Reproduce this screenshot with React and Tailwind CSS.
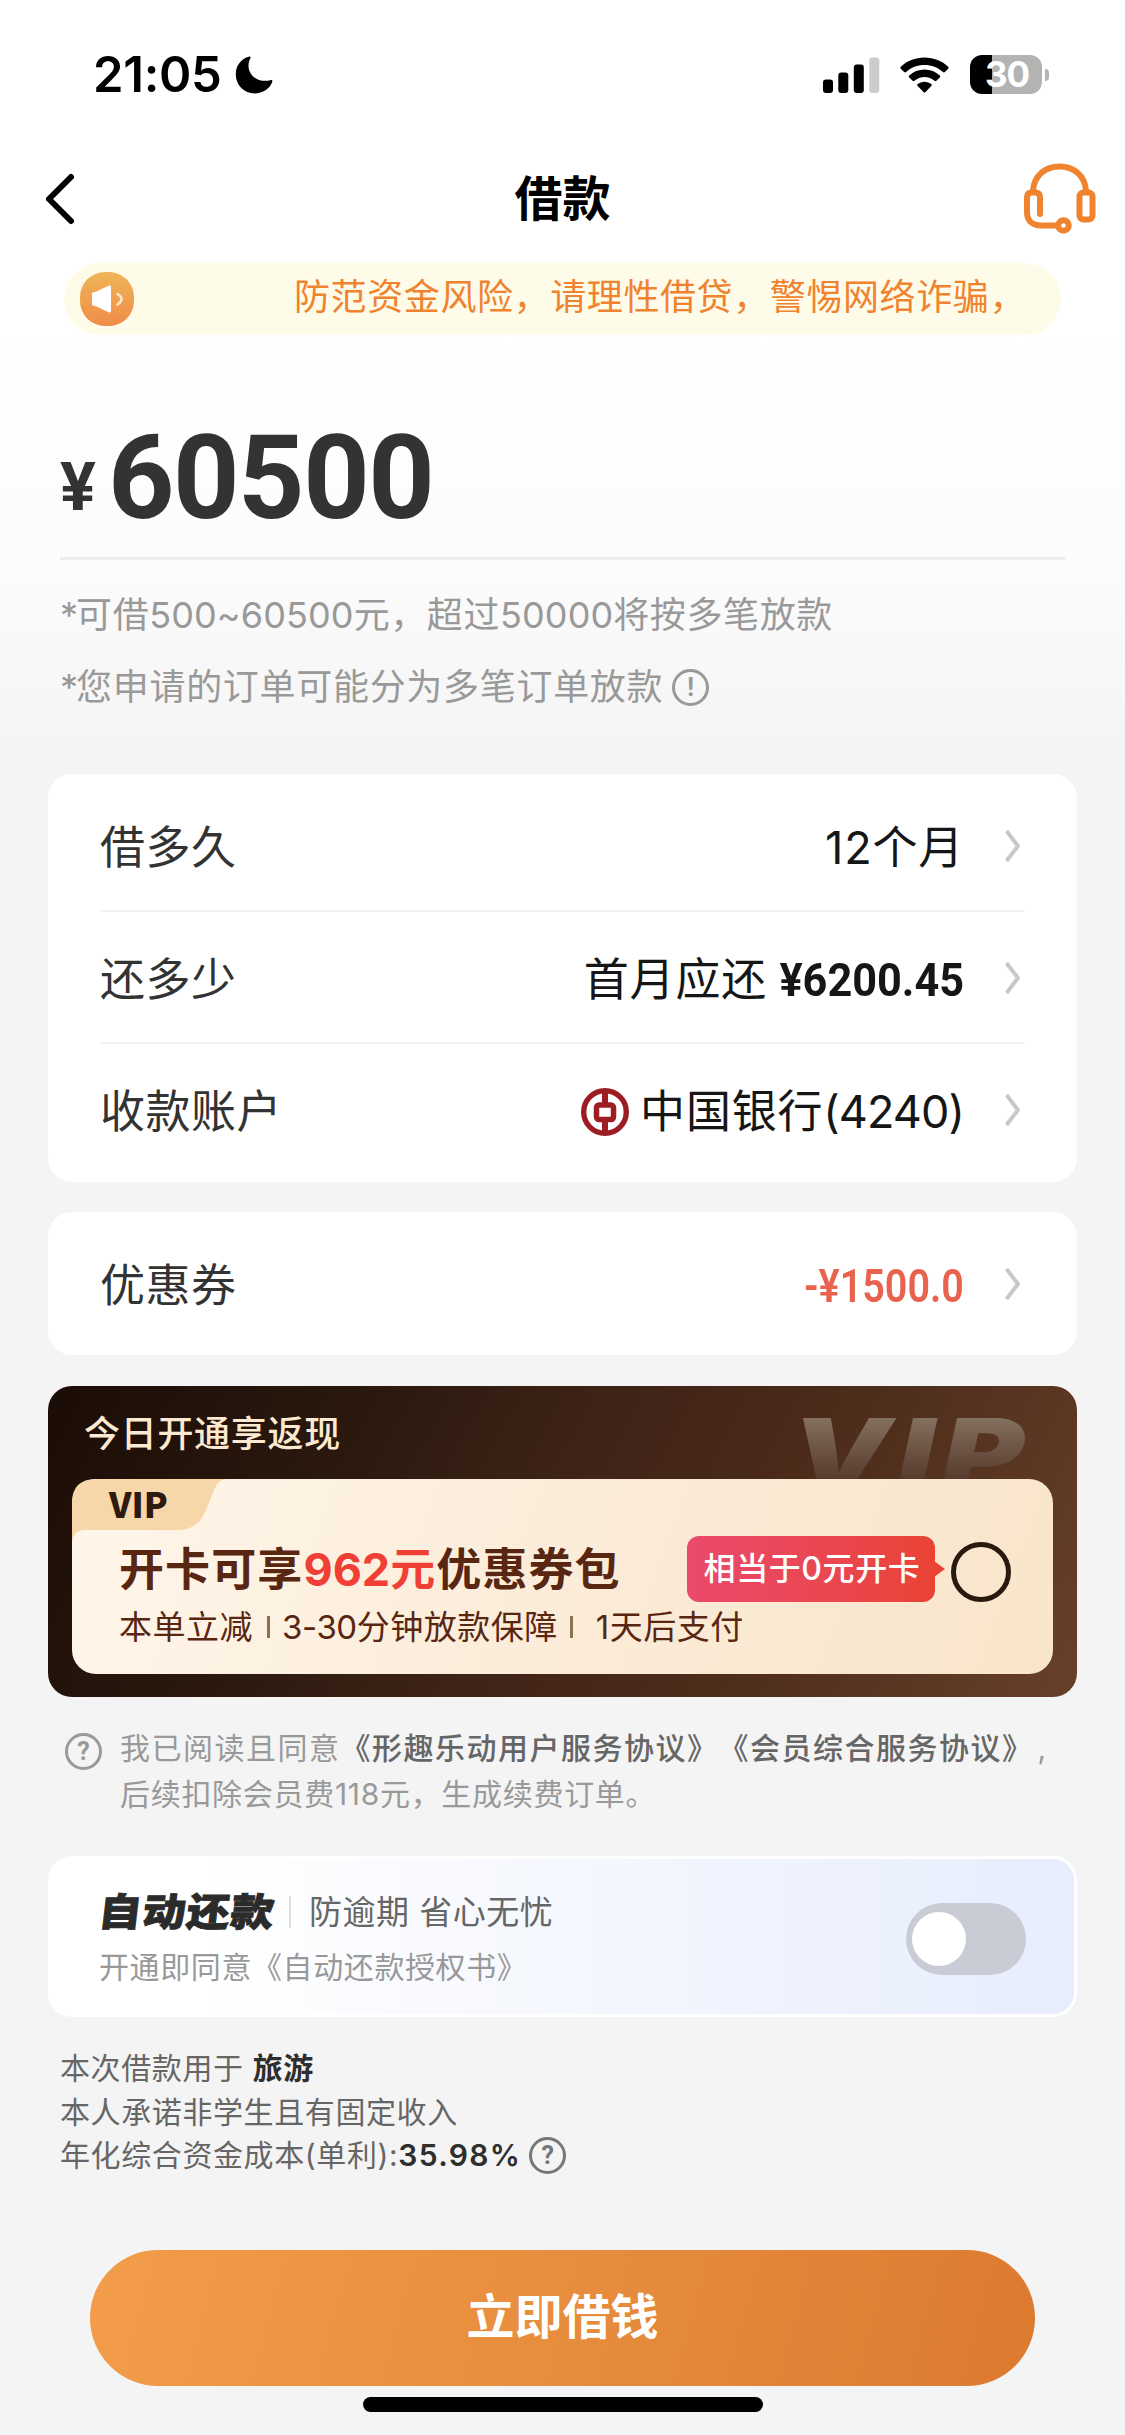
import React from "react";

function Moon() {
  return (
    <svg width="38" height="38" viewBox="0 0 38 38">
      <path d="M14.5 .6C5.6 3 .8 9.900.8 18.500.8 29.500 9.200 37.400 19.600 37.400 28 37.400 34.600 32.800 37.200 26 37.800 24.200 36.800 23.700 35.300 24.200 24.600 27 13.500 20.800 13.500 9.500 13.500 6.900 14.300 4.600 15.300 2.300 15.900 1 15.600.400 14.500.600Z" />
    </svg>
  );
}

function Signal() {
  return (
    <svg width="57" height="36" viewBox="0 0 57 36">
      <rect x="0" y="22.500" width="10" height="13.500" rx="3" />
      <rect x="15.300" y="15.500" width="10" height="20.500" rx="3" />
      <rect x="30.800" y="7.500" width="10" height="28.500" rx="3" />
      <rect x="46.300" y=".5" width="10" height="35.500" rx="3" fill="#cccccc" />
    </svg>
  );
}

function Wifi() {
  return (
    <svg width="49" height="36" viewBox="0 0 49 36">
      <path d="M24.500 .5C15.300.500 6.900 4 .8 9.700.2 10.300.200 11.100.800 11.700L4.100 15C4.700 15.600 5.500 15.600 6.100 15 11 10.600 17.400 8 24.500 8S38 10.600 42.900 15C43.500 15.600 44.300 15.600 44.900 15L48.200 11.700C48.800 11.100 48.800 10.300 48.200 9.700 42.100 4 33.700.500 24.500.500Z" />
      <path d="M24.500 12.600C18.600 12.600 13.300 14.800 9.200 18.400 8.600 19 8.600 19.800 9.200 20.400L12.600 23.700C13.200 24.300 13.900 24.300 14.500 23.800 17.200 21.500 20.700 20.100 24.500 20.100S31.800 21.500 34.500 23.800C35.100 24.300 35.800 24.300 36.400 23.700L39.800 20.400C40.400 19.800 40.400 19 39.800 18.400 35.700 14.800 30.400 12.600 24.500 12.600Z" />
      <path d="M24.500 24.700C21.900 24.700 19.600 25.600 17.700 27.100 17.100 27.600 17.100 28.400 17.700 29L23.500 35C24.100 35.700 24.900 35.700 25.500 35L31.300 29C31.900 28.400 31.900 27.600 31.300 27.100 29.400 25.600 27.100 24.700 24.500 24.700Z" />
    </svg>
  );
}

function Headset() {
  return (
    <svg width="74" height="72" viewBox="0 0 74 72" fill="none" stroke="#f0832e" strokeWidth="6" strokeLinecap="round" strokeLinejoin="round">
      <path d="M10 28V27.500C11 13 22 3.500 36.500 3.500S62 13 63 27.500V28" />
      <path d="M17 51V34.500Q17 29.500 12 29.500H9Q4 29.500 4 34.500V49C4 58 9.500 62.500 18 62.500H34" />
      <rect x="56.500" y="29.500" width="13" height="27" rx="4" />
      <circle cx="40.500" cy="62.500" r="5.300" />
    </svg>
  );
}

function Speaker() {
  return (
    <div className="flex size-[54px] items-center justify-center rounded-[25px] bg-linear-to-t from-[#f08c48] to-[#efb556]">
      <svg width="54" height="54" viewBox="0 0 54 54">
        <path d="M12 22Q12 20.500 13.500 20.200L16 19.800L28.500 13.800Q31 12.800 31 15.500V38.500Q31 41.200 28.500 40.200L16 34.200L13.500 33.800Q12 33.500 12 32Z" fill="#fff" />
        <path d="M37.500 22Q41.500 24 41.500 27T37.500 32.500" fill="none" stroke="#fde9d0" strokeWidth="2.500" strokeLinecap="round" />
      </svg>
    </div>
  );
}

function BankLogo() {
  return (
    <svg width="48" height="48" viewBox="0 0 48 48" fill="none" stroke="#9d1d24">
      <circle cx="24" cy="24" r="21.300" strokeWidth="5.400" />
      <path d="M24 3V15M24 33V45" strokeWidth="6" />
      <rect x="15.500" y="17" width="17" height="14.500" rx="2.500" strokeWidth="5.500" />
    </svg>
  );
}

function Mark({ children, className }) {
  return (
    <span className={"flex size-[37px] shrink-0 items-center justify-center rounded-full border-[3px] border-current font-['Roboto'] font-bold text-[25px] leading-none tracking-normal " + className}>
      {children}
    </span>
  );
}

function Arrow() {
  return (
    <svg className="ml-[39px] mr-[3px]" width="19" height="32" viewBox="0 0 19 32" fill="none" stroke="#c8c8c8" strokeWidth="4">
      <path d="M3.500 1L15 16L3.500 31" strokeLinejoin="round" />
    </svg>
  );
}

function Row({ label, children, className }) {
  return (
    <div className={"flex items-center text-[45px] leading-[60px] tracking-[0.8px] text-[#161616] " + className}>
      <span className="-ml-px pt-[4px] tracking-[0.5px] text-[#333]">{label}</span>
      <div className="ml-auto flex items-center pt-[4px]">{children}</div>
      <Arrow />
    </div>
  );
}

export default function App() {
  return (
    <div className="flex h-[2435px] w-[1125px] flex-col overflow-hidden bg-[#f4f4f4] bg-[linear-gradient(180deg,#fff_0px,#fff_340px,#fcfcfc_560px,#f4f4f4_760px)] font-['Inter','Noto_Sans_CJK_SC',sans-serif] whitespace-nowrap [text-spacing-trim:space-all]">
      <header className="flex h-[149px] items-center pl-[93px] pr-[76px]">
        <span className="w-[142px] text-[49px] font-semibold leading-[60px] tracking-[-0.3px]">21:05</span>
        <Moon />
        <div className="ml-auto flex items-center">
          <Signal />
          <div className="ml-[20px] mr-[21px]"><Wifi /></div>
          <div className="flex h-[39px] w-[72px] items-center justify-center rounded-[12px] bg-[linear-gradient(90deg,#000_22px,#b3b3b3_22px)] pl-[2px] text-[35px] font-bold leading-none tracking-[-1px] text-white">30</div>
          <div className="ml-[3px] h-[12px] w-[4px] rounded-r-full bg-[#b3b3b3]" />
        </div>
      </header>

      <nav className="flex h-[100px] items-center justify-between pl-[44px] pr-[28px]">
        <svg width="58" height="54" viewBox="0 0 58 54" fill="none" stroke="#000" strokeWidth="6" strokeLinecap="round" strokeLinejoin="round">
          <path d="M27 5L5 27L27 49" />
        </svg>
        <h1 className="text-[48px] font-bold leading-[60px] text-black">借款</h1>
        <Headset />
      </nav>

      <div className="mx-[64px] mt-[14px] flex h-[72px] items-center rounded-full bg-[#fefbe8] pl-[16px]">
        <Speaker />
        <p className="ml-[160px] pb-[4px] text-[36px] leading-[50px] tracking-[0.6px] text-[#ef832f]">防范资金风险，请理性借贷，警惕网络诈骗，</p>
      </div>

      <section className="mx-[60px] h-[439px]">
        <div className="flex h-[225px] items-end border-b-[3px] border-[#ebebf0] pb-[21px] font-['Roboto'] font-bold text-[#333335]">
          <span className="w-[46px] pb-[14px] text-[67px] leading-[70px]">¥</span>
          <span className="ml-[2px] text-[116px] leading-[116px] tracking-[-1.500px]">60500</span>
        </div>
        <p className="mt-[30px] text-[36px] leading-[50px] tracking-[0.6px] text-[#999]">
          <span className="tracking-[-2px]">*</span>可借<span className="tracking-[0.1px]">500~60500</span>元，超过<span className="tracking-[0.1px]">50000</span>将按多笔放款
        </p>
        <div className="mt-[22px] flex items-center text-[36px] leading-[50px] tracking-[0.7px] text-[#999]">
          <span className="tracking-[-2px]">*</span>您申请的订单可能分为多笔订单放款
          <Mark className="ml-[9px]">!</Mark>
        </div>
      </section>

      <section className="mx-[48px] h-[408px] rounded-[24px] bg-white pl-[53px] pr-[52px] pt-[6px]">
        <Row label="借多久" className="h-[132px] border-b-2 border-[#f3f3f5] pt-[2px]">12个月</Row>
        <Row label="还多少" className="h-[132px] border-b-2 border-[#f3f3f5] pt-[1px]">
          首月应还
          <b className="-ml-[4px] w-[201px] origin-right scale-x-94 text-right font-['Roboto'] text-[46px] tracking-normal">¥6200.45</b>
        </Row>
        <Row label="收款账户" className="h-[132px]">
          <BankLogo />
          <span className="ml-[11px]">中国银行<span className="tracking-[-0.9px]">(4240)</span></span>
        </Row>
      </section>

      <section className="mx-[48px] mt-[30px] h-[143px] rounded-[24px] bg-white pl-[53px] pr-[52px]">
        <Row label="优惠券" className="h-full">
          <span className="origin-right scale-x-86 font-['Roboto'] text-[46px] font-semibold tracking-normal text-[#e9624d]">-¥1500.0</span>
        </Row>
      </section>

      <section className="relative mx-[48px] mt-[31px] h-[311px] overflow-hidden rounded-[24px] bg-[linear-gradient(118deg,#1a0c06_0%,#2b190e_28%,#3f2317_48%,#4d2d1b_70%,#67402a_100%)] px-[24px]">
        <div className="absolute right-[38px] top-[9px] origin-right scale-x-130 bg-linear-to-b from-[#84705f] from-20% to-[#55382a] to-75% bg-clip-text pr-[6px] text-[96px] font-black italic leading-[116px] tracking-[6px] text-transparent">VIP</div>
        <h2 className="pl-[12px] pt-[23px] text-[36px] font-medium leading-[50px] tracking-[0.7px] text-[#fce9d2]">今日开通享返现</h2>
        <div className="relative mt-[20px] flex h-[195px] w-[981px] rounded-[24px] bg-[linear-gradient(110deg,#fff6ea,#fbebd7_55%,#f9e5cb)]">
          <svg className="absolute left-0 top-0" width="156" height="62" viewBox="0 0 156 62">
            <path d="M24 0H154Q146 1 143 9L134 31Q126 51 106 51H12Q2 51 0 62V24Q0 0 24 0Z" fill="#f7d7a9" />
          </svg>
          <span className="absolute left-[37px] top-[4px] font-['Noto_Sans_CJK_SC'] text-[35px] font-black leading-[40px] text-[#2d1a10]">VIP</span>
          <div className="pl-[47px] pt-[61px] text-[#592711]">
            <p className="text-[45px] font-bold leading-[60px] tracking-[1.100px]">开卡可享<span className="text-[#f03f34]"><b className="font-bold tracking-normal">962</b>元</span>优惠券包</p>
            <p className="flex items-center text-[33px] leading-[54px] tracking-[0.5px]">
              本单立减
              <i className="ml-[14px] mr-[12px] h-[22px] w-[3px] bg-[#8c7350]" />
              <span><span className="tracking-[-0.4px]">3-30</span>分钟放款保障</span>
              <i className="ml-[12px] mr-[23px] h-[22px] w-[3px] bg-[#8c7350]" />
              1天后支付
            </p>
          </div>
          <div className="absolute left-[615px] top-[57px] flex h-[66px] w-[248px] items-center justify-center rounded-[12px] bg-linear-to-r from-[#ea4a6c] to-[#ea4335] pl-[2px] text-[32px] font-medium leading-[44px] tracking-[0.6px] text-white">
            相当于0元开卡
            <svg className="absolute left-[247px] top-[25px]" width="11" height="16" viewBox="0 0 11 16"><path d="M0 0L11 8L0 16Z" fill="#ea4335" /></svg>
          </div>
          <div className="absolute left-[879px] top-[63px] size-[60px] rounded-full border-[5px] border-[#2a190f]" />
        </div>
      </section>

      <section className="flex h-[159px] gap-[18px] pl-[65px] pt-[28px] text-[30px] leading-[46px] text-[#999]">
        <Mark className="mt-[8px]">?</Mark>
        <div>
          <p className="tracking-[1.500px]">我已阅读且同意<span className="font-medium text-[#666]">《形趣乐动用户服务协议》《会员综合服务协议》</span><span className="pl-[4px]">,</span></p>
          <p className="tracking-[0.7px]">后续扣除会员费118元，生成续费订单。</p>
        </div>
      </section>

      <section className="mx-[48px] flex h-[161px] items-center justify-between rounded-[24px] border-[3px] border-white bg-linear-to-r from-white from-15% to-[#e7edfd] pl-[48px] pr-[48px] pt-[4px]">
        <div>
          <div className="flex h-[56px] items-center">
            <b className="w-[176px] origin-left -skew-x-6 scale-y-90 text-[43px] font-black leading-[56px] tracking-[1px] text-[#2b2b2b] [-webkit-text-stroke:1px_#2b2b2b]">自动还款</b>
            <i className="ml-[14px] mr-[18px] h-[32px] w-[2px] bg-[#ddd]" />
            <span className="text-[33px] leading-[50px] tracking-[0.5px] text-[#666]">防逾期 省心无忧</span>
          </div>
          <p className="text-[30px] leading-[54px] tracking-[0.6px] text-[#999]">开通即同意《自动还款授权书》</p>
        </div>
        <div className="flex h-[72px] w-[120px] items-center rounded-full bg-[#c9ccd5] pl-[6px]">
          <span className="size-[54px] rounded-full bg-white" />
        </div>
      </section>

      <section className="ml-[60px] mt-[30px] h-[203px] text-[30px] leading-[43.500px] tracking-[0.6px] text-[#666]">
        <p>本次借款用于 <b className="text-[#2e2e2e]">旅游</b></p>
        <p>本人承诺非学生且有固定收入</p>
        <p className="flex items-center">年化综合资金成本(单利):<b className="font-semibold tracking-[1.300px] text-[#2e2e2e]">35.98%</b><Mark className="ml-[8px] text-[#777]">?</Mark></p>
      </section>

      <button className="mx-[90px] h-[136px] shrink-0 rounded-full bg-[linear-gradient(105deg,#f39c49,#e78d3d_50%,#dc7a30)] pb-[3px] text-[48px] font-bold text-white">立即借钱</button>
      <div className="mx-auto mt-[11px] h-[15px] w-[400px] shrink-0 rounded-full bg-black" />
    </div>
  );
}
